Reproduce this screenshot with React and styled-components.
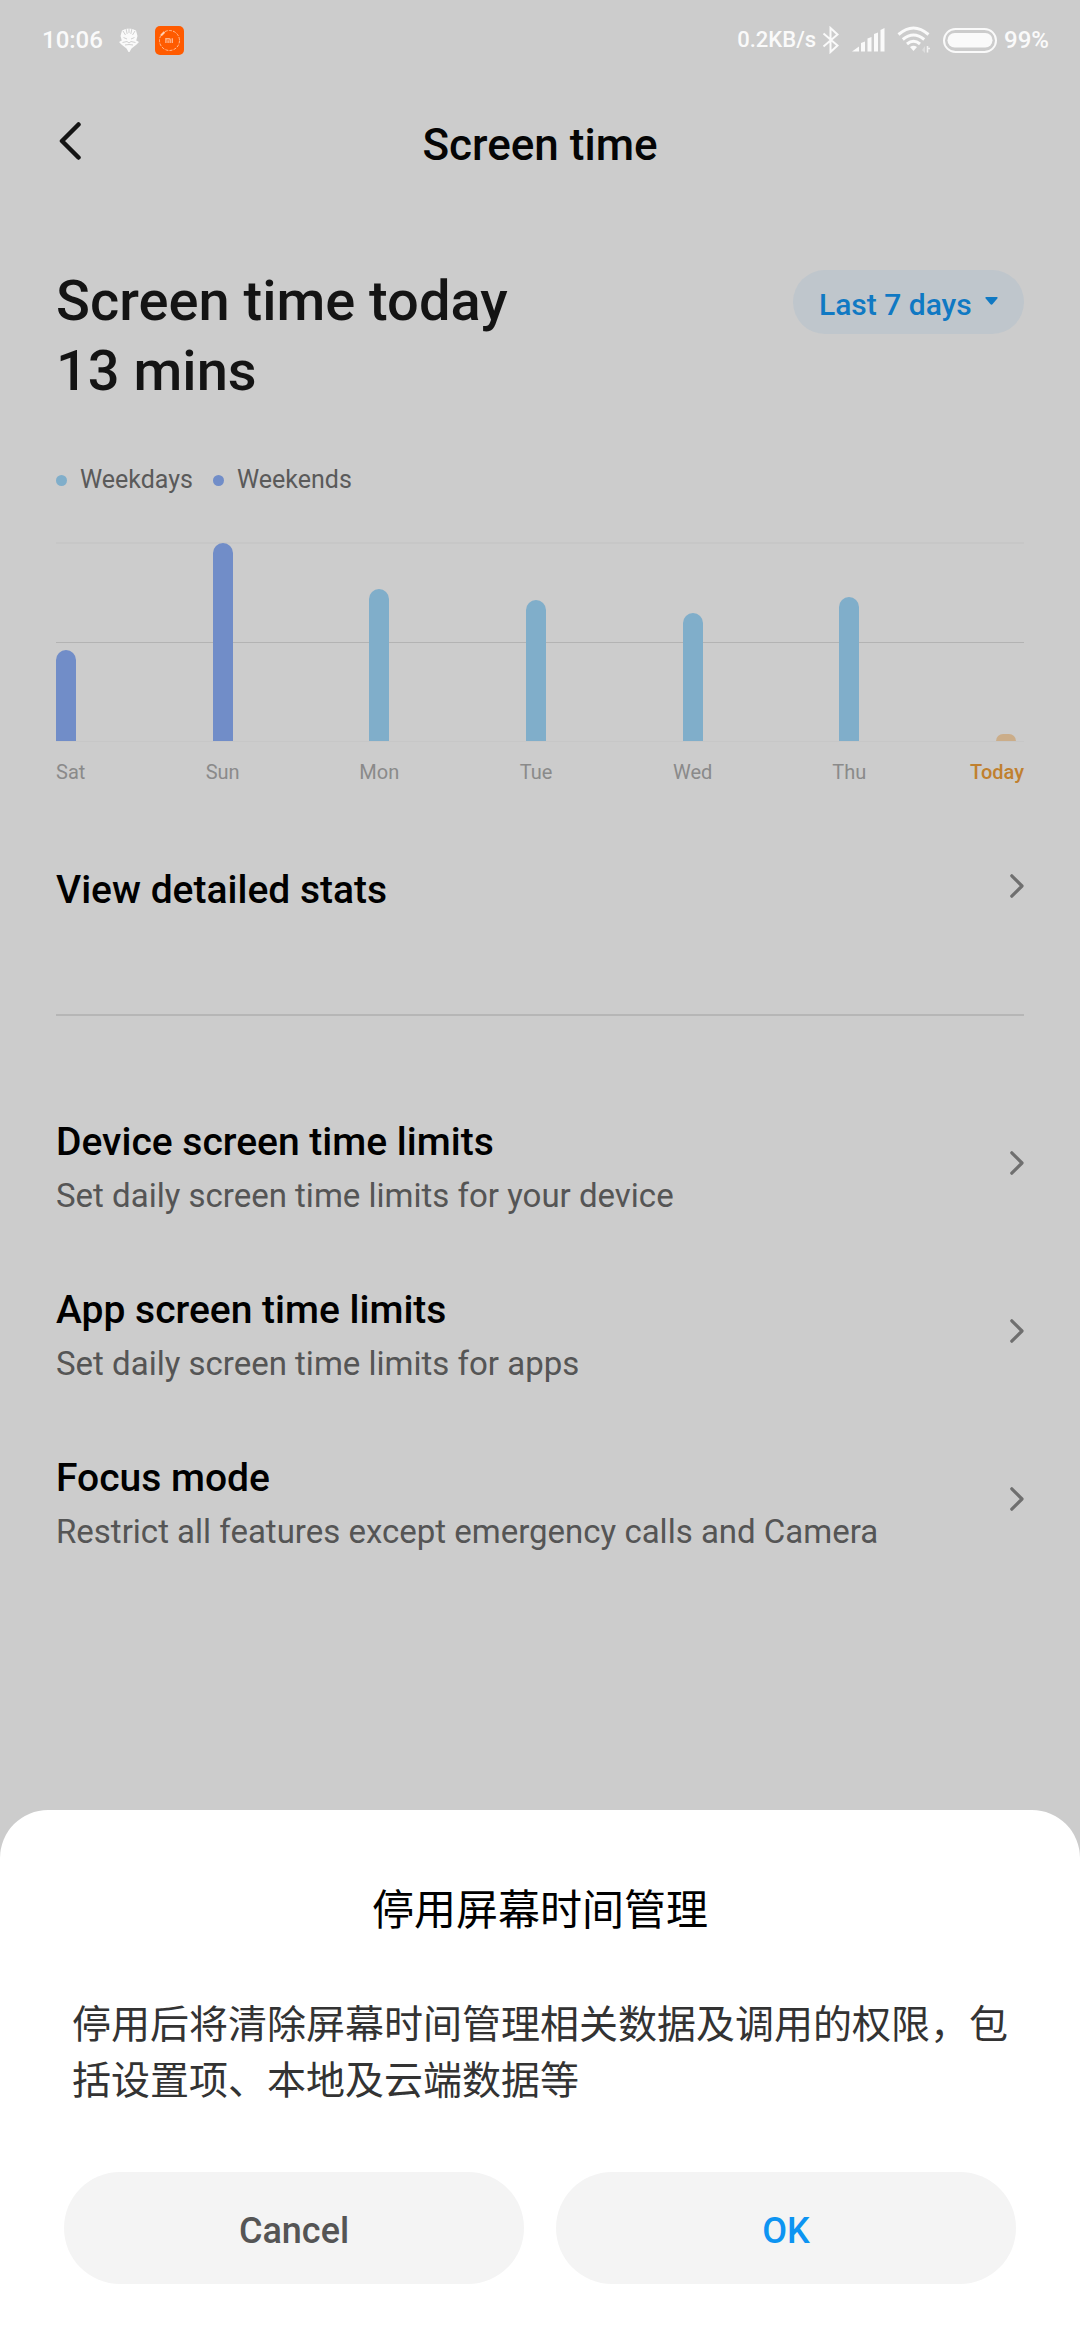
import React, { useState } from "react"
import styled, { createGlobalStyle } from "styled-components"

const GlobalStyle = createGlobalStyle`
  * {
    box-sizing: border-box;
  }

  body {
    margin: 0;
    background: #cccccc;
    font-family: Roboto, "Noto Sans CJK SC", sans-serif;
  }

  h1, h2, p {
    margin: 0;
    font-weight: 400;
  }

  button, select {
    border: 0;
    background: none;
    font-family: inherit;
    cursor: pointer;
  }

  svg {
    display: block;
    flex: none;
  }
`

const Page = styled.div`
  min-height: 100vh;
  background: #cccccc;
`

const StatusBar = styled.header`
  display: flex;
  justify-content: space-between;
  align-items: center;
  height: 80px;
  padding: 0 31px 0 42px;
  color: #fafafa;
`

const StatusGroup = styled.div`
  display: flex;
  align-items: center;
  gap: ${props => props.$gap}px;
`

const StatusText = styled.span`
  font-size: ${props => (props.$small ? 22 : 24)}px;
  font-weight: 500;
  line-height: 28px;
`

const TitleBar = styled.div`
  display: grid;
  grid-template-columns: 1fr auto 1fr;
  align-items: center;
  height: 122px;
  padding: 0 56px;
`

const BackButton = styled.button`
  justify-self: start;
  padding: 0;
  color: #141414;
`

const Title = styled.h1`
  padding-top: 8px;
  color: #050505;
  font-size: 44px;
  font-weight: 500;
  line-height: 56px;
`

const Content = styled.main`
  padding: 64px 56px 0;
`

const Summary = styled.div`
  display: flex;
  justify-content: space-between;
  align-items: flex-start;
`

const SummaryText = styled.h2`
  color: #141414;
  font-size: 56px;
  font-weight: 500;
  line-height: 70px;
`

const Picker = styled.div`
  position: relative;
  margin-top: 4px;
  color: #1079c3;
`

const PickerSelect = styled.select`
  height: 64px;
  padding: 4px 52px 0 26px;
  border-radius: 32px;
  background: #bfc6cc;
  color: inherit;
  font-size: 30px;
  font-weight: 500;
  appearance: none;
`

const PickerCaret = styled.svg`
  position: absolute;
  top: 27px;
  right: 26px;
  pointer-events: none;
`

const Legend = styled.div`
  display: flex;
  gap: 20px;
  margin-top: 58px;
`

const LegendItem = styled.span`
  display: flex;
  align-items: center;
  gap: 13px;
  color: #5a5a5a;
  font-size: 25px;
  line-height: 32px;

  &::before {
    content: "";
    width: 11px;
    height: 11px;
    border-radius: 50%;
    background: ${props => props.$color};
  }
`

const Plot = styled.div`
  display: flex;
  justify-content: space-between;
  align-items: flex-end;
  height: 200px;
  margin-top: 46px;
  padding-right: 8px;
  border-top: 2px solid #c7c7c7;
  border-bottom: 1px solid #c7c7c7;
  background: linear-gradient(#b3b3b3, #b3b3b3) 0 98px / 100% 1px no-repeat;
`

const Bar = styled.div`
  width: 20px;
  border-radius: 10px 10px 0 0;
  background: ${props => props.$color};
`

const Days = styled.div`
  display: flex;
  justify-content: space-between;
  margin-top: 18px;
  padding-right: 8px;
`

const Day = styled.span`
  display: flex;
  justify-content: ${props => props.$align};
  width: 20px;
  color: #8a8a8a;
  font-size: 20px;
  line-height: 24px;
`

/* reaches past the bar to the right edge of the grid lines */
const LastDay = styled(Day)`
  width: 28px;
  margin-right: -8px;
  color: #c0802f;
  font-weight: 500;
`

const Row = styled.button`
  display: flex;
  justify-content: space-between;
  align-items: center;
  width: 100%;
  padding: 31px 0;
  color: #6f6f6f;
  text-align: left;
`

const RowText = styled.span`
  display: flex;
  flex-direction: column;
  gap: 10px;
  padding-top: 8px;
`

const RowTitle = styled.span`
  color: #000000;
  font-size: 39px;
  font-weight: 500;
  line-height: 48px;
`

const RowHint = styled.span`
  color: #555555;
  font-size: 33px;
  line-height: 40px;
`

const StatsSection = styled.section`
  padding: 43px 0 69px;
  border-bottom: 2px solid #b6b6b6;
`

const LimitsSection = styled.section`
  padding-top: 63px;
`

const Sheet = styled.section`
  position: fixed;
  right: 0;
  bottom: 0;
  left: 0;
  padding: 69px 64px 56px;
  border-radius: 48px 48px 0 0;
  background: #ffffff;
`

const SheetTitle = styled.h2`
  color: #000000;
  font-family: "Noto Sans CJK SC", sans-serif;
  font-size: 42px;
  line-height: 56px;
  text-align: center;
`

const SheetText = styled.p`
  margin-top: 58px;
  padding: 0 8px;
  color: #333333;
  font-family: "Noto Sans CJK SC", sans-serif;
  font-size: 39px;
  line-height: 56px;
`

const SheetActions = styled.div`
  display: flex;
  gap: 32px;
  margin-top: 67px;
`

const SheetButton = styled.button`
  flex: 1;
  height: 112px;
  padding: 6px 0 0;
  border-radius: 56px;
  background: #f4f4f4;
  color: ${props => (props.$primary ? "#0d94f2" : "#555555")};
  font-size: 36px;
  font-weight: 500;
`

const WEEKDAY = "#80aeca"
const WEEKEND = "#718dc8"
const TODAY = "#cbad89"

const days = [
  { name: "Sat", height: 91, color: WEEKEND },
  { name: "Sun", height: 198, color: WEEKEND },
  { name: "Mon", height: 152, color: WEEKDAY },
  { name: "Tue", height: 141, color: WEEKDAY },
  { name: "Wed", height: 128, color: WEEKDAY },
  { name: "Thu", height: 144, color: WEEKDAY },
  { name: "Today", height: 7, color: TODAY },
]

const limits = [
  {
    title: "Device screen time limits",
    hint: "Set daily screen time limits for your device",
  },
  {
    title: "App screen time limits",
    hint: "Set daily screen time limits for apps",
  },
  {
    title: "Focus mode",
    hint: "Restrict all features except emergency calls and Camera",
  },
]

const FaceIcon = () => (
  <svg width="20" height="24" viewBox="0 0 20 24" fill="#fafafa">
    <path d="M3 2.500Q10-1.500 17 2.500L18.500 8L17.200 12.500L20 14L17 17L12.500 20.500L10.500 24H9.500L7.500 20.500L3 17L0 14L2.800 12.500L1.500 8Z" />
    <g stroke="#cccccc" strokeWidth="0.900" fill="none">
      <path d="M7 0.500L8.200 6M10 0V5M13 0.500L11.800 6M4 3L6.500 7M16 3L13.500 7" />
      <path d="M4.500 9.500L8 11M15.500 9.500L12 11M3.500 14.500L8 13.500L10 15L12 13.500L16.500 14.500M6 17L10 16.500L14 17" />
    </g>
  </svg>
)

const MiIcon = () => (
  <svg width="29" height="29" viewBox="0 0 29 29" fill="none">
    <rect width="29" height="29" rx="5" fill="#ff5b00" />
    <circle
      cx="14.500"
      cy="14.500"
      r="10"
      stroke="#ffc6a3"
      strokeWidth="0.900"
      strokeDasharray="3 1.200"
    />
    <path d="M6 9.500L9.500 6" stroke="#ffd0b3" strokeWidth="2" />
    <path
      d="M10.900 17V12.800H14.200Q15.200 12.800 15.200 13.800V17M13.100 14.300V17M17.300 12.300V17"
      stroke="#ffb48a"
      strokeWidth="1.400"
    />
  </svg>
)

const BluetoothIcon = () => (
  <svg width="18" height="28" viewBox="0 0 18 28" fill="none">
    <path
      d="M1.500 7.500L15.500 19.500L8.500 26V2L15.500 8.500L1.500 20.500"
      stroke="#fafafa"
      strokeWidth="2"
    />
  </svg>
)

const SignalIcon = () => (
  <svg width="33" height="24" viewBox="0 0 33 24" fill="#fafafa">
    <path d="M0 23.500L7 18.500V23.500ZM9 15L13 13.500V23.500H9ZM15.500 10.500L19.500 9V23.500H15.500ZM22 6L26 4.500V23.500H22ZM28.500 2L32.500 0V23.500H28.500Z" />
  </svg>
)

const WifiIcon = () => (
  <svg width="34" height="28" viewBox="0 0 34 28" fill="none">
    <g stroke="#fafafa" strokeWidth="3">
      <path d="M1.500 8.500Q16.500-4.500 31.500 8.500" />
      <path d="M5.800 13.500Q16.500 4.500 27.200 13.500" />
      <path d="M10 18Q16.500 12.500 23 18" />
    </g>
    <path d="M13 21Q16.500 18.500 20 21L16.500 25Z" fill="#fafafa" />
    <path d="M25 24L28 20V27Z" fill="#dddddd" />
    <path d="M30.500 20V26.500M30 22.500H33" stroke="#f2f2f2" strokeWidth="1.500" />
  </svg>
)

const BatteryIcon = () => (
  <svg width="54" height="25" viewBox="0 0 54 25" fill="none">
    <rect
      x="1"
      y="1"
      width="52"
      height="23"
      rx="11.500"
      stroke="#fafafa"
      strokeWidth="2"
    />
    <rect x="4.500" y="5" width="45" height="14.500" rx="7.250" fill="#fafafa" />
  </svg>
)

const BackIcon = () => (
  <svg width="28" height="38" viewBox="0 0 28 38" fill="none">
    <path
      d="M22.500 2.500L6 19L22.500 35.500"
      stroke="currentColor"
      strokeWidth="4.500"
      strokeLinecap="round"
      strokeLinejoin="round"
    />
  </svg>
)

const ChevronIcon = () => (
  <svg width="14" height="24" viewBox="0 0 14 24" fill="none">
    <path
      d="M1.800 1.800L12 12L1.800 22.200"
      stroke="currentColor"
      strokeWidth="3.200"
      strokeLinecap="round"
      strokeLinejoin="round"
    />
  </svg>
)

const SettingRow = ({ title, hint }) => (
  <Row type="button">
    <RowText>
      <RowTitle>{title}</RowTitle>
      {hint && <RowHint>{hint}</RowHint>}
    </RowText>
    <ChevronIcon />
  </Row>
)

const WeekChart = () => (
  <div>
    <Plot>
      {days.map(day => (
        <Bar key={day.name} $color={day.color} style={{ height: day.height }} />
      ))}
    </Plot>
    <Days>
      {days.map((day, i) => {
        if (i === days.length - 1) {
          return (
            <LastDay key={day.name} $align="flex-end">
              {day.name}
            </LastDay>
          )
        }
        return (
          <Day key={day.name} $align={i === 0 ? "flex-start" : "center"}>
            {day.name}
          </Day>
        )
      })}
    </Days>
  </div>
)

const App = () => {
  const [isSheetOpen, setSheetOpen] = useState(true)

  return (
    <Page>
      <GlobalStyle />

      <StatusBar>
        <StatusGroup $gap={16}>
          <StatusText>10:06</StatusText>
          <FaceIcon />
          <MiIcon />
        </StatusGroup>
        <StatusGroup $gap={12}>
          <StatusGroup $gap={6}>
            <StatusText $small>0.2KB/s</StatusText>
            <BluetoothIcon />
          </StatusGroup>
          <SignalIcon />
          <WifiIcon />
          <StatusGroup $gap={7}>
            <BatteryIcon />
            <StatusText>99%</StatusText>
          </StatusGroup>
        </StatusGroup>
      </StatusBar>

      <TitleBar>
        <BackButton type="button" aria-label="Back">
          <BackIcon />
        </BackButton>
        <Title>Screen time</Title>
      </TitleBar>

      <Content>
        <Summary>
          <SummaryText>
            Screen time today
            <br />
            13 mins
          </SummaryText>
          <Picker>
            <PickerSelect aria-label="Period">
              <option>Last 7 days</option>
            </PickerSelect>
            <PickerCaret width="13" height="8" viewBox="0 0 13 8">
              <path
                d="M1.200 0H11.800Q13.200 0.200 12.300 1.500L7.700 7Q6.500 8.300 5.300 7L0.700 1.500Q-0.200 0.200 1.200 0Z"
                fill="currentColor"
              />
            </PickerCaret>
          </Picker>
        </Summary>

        <Legend>
          <LegendItem $color={WEEKDAY}>Weekdays</LegendItem>
          <LegendItem $color={WEEKEND}>Weekends</LegendItem>
        </Legend>

        <WeekChart />

        <StatsSection>
          <SettingRow title="View detailed stats" />
        </StatsSection>

        <LimitsSection>
          {limits.map(item => (
            <SettingRow key={item.title} title={item.title} hint={item.hint} />
          ))}
        </LimitsSection>
      </Content>

      {isSheetOpen && (
        <Sheet role="dialog" aria-labelledby="sheet-title">
          <SheetTitle id="sheet-title">停用屏幕时间管理</SheetTitle>
          <SheetText>
            停用后将清除屏幕时间管理相关数据及调用的权限，包括设置项、本地及云端数据等
          </SheetText>
          <SheetActions>
            <SheetButton type="button" onClick={() => setSheetOpen(false)}>
              Cancel
            </SheetButton>
            <SheetButton
              type="button"
              $primary
              onClick={() => setSheetOpen(false)}
            >
              OK
            </SheetButton>
          </SheetActions>
        </Sheet>
      )}
    </Page>
  )
}

export default App
